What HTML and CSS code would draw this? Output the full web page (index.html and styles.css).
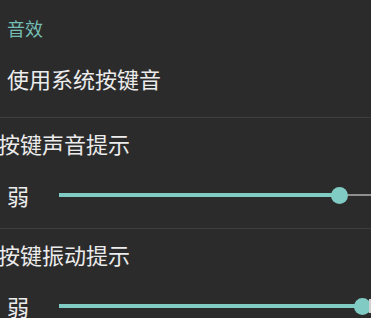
FILE: index.html
```html
<!DOCTYPE html>
<html lang="zh-CN">
<head>
<meta charset="utf-8">
<title>音效</title>
<link rel="stylesheet" href="styles.css">
</head>
<body>
<div class="screen">
  <div class="category">音效</div>
  <div class="pref-single">使用系统按键音</div>
  <div class="group">
    <div class="group-title">按键声音提示</div>
    <div class="slider-row">
      <span class="slider-label">弱</span>
      <div class="slider">
        <div class="track"></div>
        <div class="fill" style="width:280px"></div>
        <div class="thumb" style="left:280px"></div>
      </div>
    </div>
  </div>
  <div class="group">
    <div class="group-title">按键振动提示</div>
    <div class="slider-row">
      <span class="slider-label">弱</span>
      <div class="slider">
        <div class="track"></div>
        <div class="fill" style="width:303px"></div>
        <div class="thumb" style="left:303px"></div>
        <div class="edge"></div>
      </div>
    </div>
  </div>
</div>
</body>
</html>
```

FILE: styles.css
```css
html, body {
  margin: 0;
  padding: 0;
  background: #2b2b2b;
  overflow: hidden;
}
.screen {
  width: 371px;
  height: 318px;
  overflow: hidden;
  font-family: "Noto Sans CJK SC", "Noto Sans", sans-serif;
  color: #ececec;
}
.category {
  font-size: 18px;
  line-height: 18px;
  color: #74bdb4;
  padding: 19px 0 0 7px;
}
.pref-single {
  font-size: 22px;
  line-height: 22px;
  padding: 30px 0 0 7px;
  height: 50px;
  border-bottom: 1px solid #3e3e3e;
}
.group {
  padding: 14px 0 22px 0;
  border-bottom: 1px solid #3e3e3e;
}
.group-title {
  font-size: 22px;
  line-height: 22px;
  margin-left: -2px;
  white-space: nowrap;
}
.slider-row {
  display: flex;
  align-items: center;
  margin-top: 30px;
  height: 22px;
}
.slider-label {
  font-size: 22px;
  line-height: 22px;
  width: 52px;
  padding-left: 7px;
  flex: none;
}
.slider {
  position: relative;
  flex: none;
  width: 320px;
  height: 22px;
}
.track {
  position: absolute;
  left: 0;
  right: 0;
  top: 10px;
  height: 2px;
  background: #8e8e8e;
}
.fill {
  position: absolute;
  left: 0;
  top: 9px;
  height: 4px;
  background: #80cbc4;
}
.thumb {
  position: absolute;
  top: 2.5px;
  width: 17px;
  height: 17px;
  margin-left: -8.5px;
  border-radius: 50%;
  background: #80cbc4;
}
.edge {
  position: absolute;
  left: 310px;
  top: 4px;
  width: 4px;
  height: 14px;
  background: #cfcfcf;
}
```
